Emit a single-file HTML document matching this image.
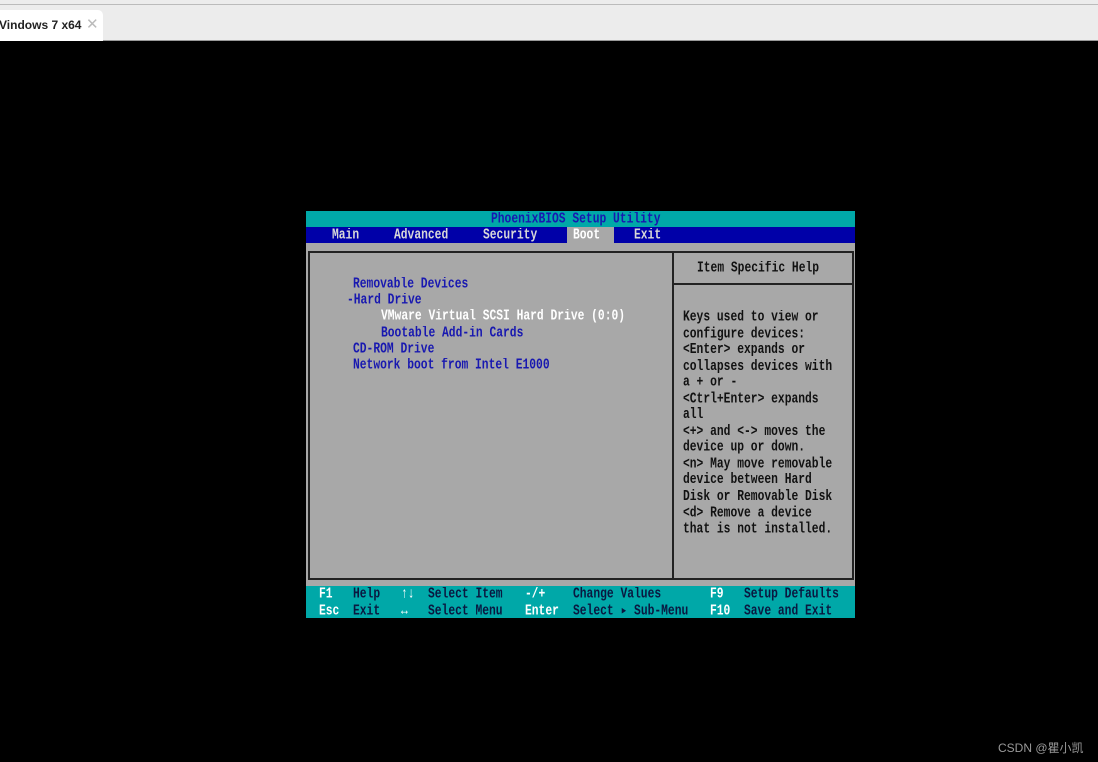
<!DOCTYPE html>
<html><head><meta charset="utf-8"><style>
body{margin:0;width:1098px;height:762px;background:#000;position:relative;overflow:hidden;font-family:"Liberation Mono",monospace;}
.t{position:absolute;font-size:11.3px;line-height:12.5px;white-space:pre;font-weight:bold;transform:scaleY(1.3);transform-origin:0 0;margin-top:1px}
.b{color:#1818b0}.w{color:#fff}.k{color:#111}.g{color:#d8d8d8}.n{color:#0a1840}
</style></head><body>
<div style="position:absolute;left:0;top:0;width:1098px;height:40px;background:#ececec;border-bottom:1px solid #999"></div>
<div style="position:absolute;left:0;top:4px;width:1098px;height:1px;background:#bbb"></div>
<div style="position:absolute;left:0;top:10px;width:103px;height:31px;background:#fff;border-radius:0 5px 0 0"></div>
<div style="position:absolute;left:-1px;top:18px;font:bold 12px 'Liberation Sans',sans-serif;color:#222;">Vindows 7 x64</div>
<div style="position:absolute;left:86px;top:15px;font:15px 'Liberation Sans',sans-serif;color:#bbb;">✕</div>

<div style="position:absolute;left:306px;top:211px;width:549px;height:16px;background:#00a8a8"></div>
<div style="position:absolute;left:306px;top:227px;width:549px;height:16px;background:#0000a8"></div>
<div style="position:absolute;left:306px;top:243px;width:549px;height:343px;background:#a8a8a8"></div>
<div style="position:absolute;left:306px;top:586px;width:549px;height:32px;background:#00a8a8"></div>
<div style="position:absolute;left:567px;top:227px;width:47px;height:16px;background:#a8a8a8"></div>
<div style="position:absolute;left:308px;top:251px;width:542px;height:325px;border:2px solid #222"></div>
<div style="position:absolute;left:672px;top:251px;width:2px;height:327px;background:#222"></div>
<div style="position:absolute;left:672px;top:283px;width:180px;height:2px;background:#222"></div>

<div class="t b" style="left:491px;top:211px">PhoenixBIOS Setup Utility</div>
<div class="t g" style="left:332px;top:227px">Main</div>
<div class="t g" style="left:394px;top:227px">Advanced</div>
<div class="t g" style="left:483px;top:227px">Security</div>
<div class="t w" style="left:573px;top:227px">Boot</div>
<div class="t g" style="left:634px;top:227px">Exit</div>

<div class="t b" style="left:353px;top:276px">Removable Devices</div>
<div class="t b" style="left:347px;top:292px">-Hard Drive</div>
<div class="t w" style="left:381px;top:308px">VMware Virtual SCSI Hard Drive (0:0)</div>
<div class="t b" style="left:381px;top:325px">Bootable Add-in Cards</div>
<div class="t b" style="left:353px;top:341px">CD-ROM Drive</div>
<div class="t b" style="left:353px;top:357px">Network boot from Intel E1000</div>

<div class="t k" style="left:697px;top:260px">Item Specific Help</div>
<div class="t k" style="left:683px;top:309px;line-height:12.54px">Keys used to view or
configure devices:
&lt;Enter&gt; expands or
collapses devices with
a + or -
&lt;Ctrl+Enter&gt; expands
all
&lt;+&gt; and &lt;-&gt; moves the
device up or down.
&lt;n&gt; May move removable
device between Hard
Disk or Removable Disk
&lt;d&gt; Remove a device
that is not installed.</div>

<div class="t w" style="left:319px;top:586px">F1
Esc</div>
<div class="t n" style="left:353px;top:586px">Help
Exit</div>
<div class="t w" style="left:401px;top:586px">↑↓
↔</div>
<div class="t n" style="left:428px;top:586px">Select Item
Select Menu</div>
<div class="t w" style="left:525px;top:586px">-/+
Enter</div>
<div class="t n" style="left:573px;top:586px">Change Values
Select ▸ Sub-Menu</div>
<div class="t w" style="left:710px;top:586px">F9
F10</div>
<div class="t n" style="left:744px;top:586px">Setup Defaults
Save and Exit</div>

<div style="position:absolute;left:998px;top:739px;font:12px 'Liberation Sans','Noto Sans CJK SC',sans-serif;color:#999">CSDN @瞿小凯</div>
</body></html>
